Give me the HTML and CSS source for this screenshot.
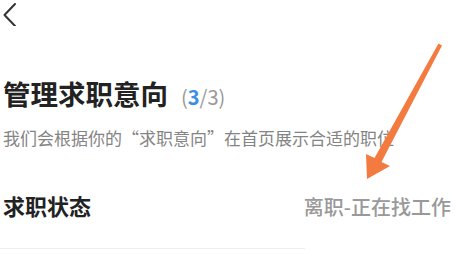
FILE: index.html
```html
<!DOCTYPE html>
<html>
<head>
  <title>管理求职意向</title>
  <link rel="stylesheet" href="styles.css">
</head>
<body>

  <header class="nav">
    <svg class="back" width="16" height="26" viewBox="0 0 16 26">
      <path d="M14 4 L3.5 15 L14 26" fill="none" stroke="#333" stroke-width="2" stroke-linecap="round" stroke-linejoin="round"/>
    </svg>
  </header>

  <main class="page">
    <h1 class="title">管理求职意向<span class="count">(<b>3</b>/3)</span></h1>
    <p class="subtitle">我们会根据你的“求职意向”在首页展示合适的职位</p>

    <div class="row">
      <span class="row-label">求职状态</span>
      <span class="row-value">离职-正在找工作</span>
    </div>
    <div class="divider"></div>
  </main>

  <!-- annotation arrow drawn over the screenshot -->
  <svg class="arrow" width="459" height="268" viewBox="0 0 459 268">
    <path d="M438.5 43.5 L442 45.5 L381.5 162 L390 166 L367 179 L366 154 L374.5 158 Z" fill="#f47b3f"/>
  </svg>

</body>
</html>
```

FILE: styles.css
```css
body {
  font-family: "Noto Sans CJK SC", "Noto Sans", sans-serif;
  background-color: white;
  margin: 0;
  padding: 0;
  color: #222;
  position: relative;
  overflow: hidden;
}

.nav {
  height: 31px;
  padding-left: 1px;
}

.back {
  display: block;
}

.page {
  padding: 0 8px 0 3px;
}

.title {
  margin: 49px 0 0;
  font-size: 27.5px;
  line-height: 27px;
  font-weight: bold;
  color: #222;
}

.count {
  margin-left: 13px;
  font-size: 20px;
  font-weight: normal;
  color: #999;
}

.count b {
  font-weight: bold;
  color: #3a8ee6;
}

.subtitle {
  margin: 19px 0 0;
  font-size: 17px;
  line-height: 17px;
  color: #848484;
}

.row {
  display: flex;
  justify-content: space-between;
  align-items: baseline;
  margin-top: 48px;
}

.row-label {
  font-size: 22px;
  line-height: 22px;
  font-weight: bold;
  color: #222;
}

.row-value {
  font-size: 20px;
  line-height: 20px;
  font-weight: 500;
  color: #999;
}

.divider {
  margin: 31px 0 0 -3px;
  width: 305px;
  height: 1px;
  background-color: #eee;
}

.arrow {
  position: absolute;
  top: 0;
  left: 0;
}
```
